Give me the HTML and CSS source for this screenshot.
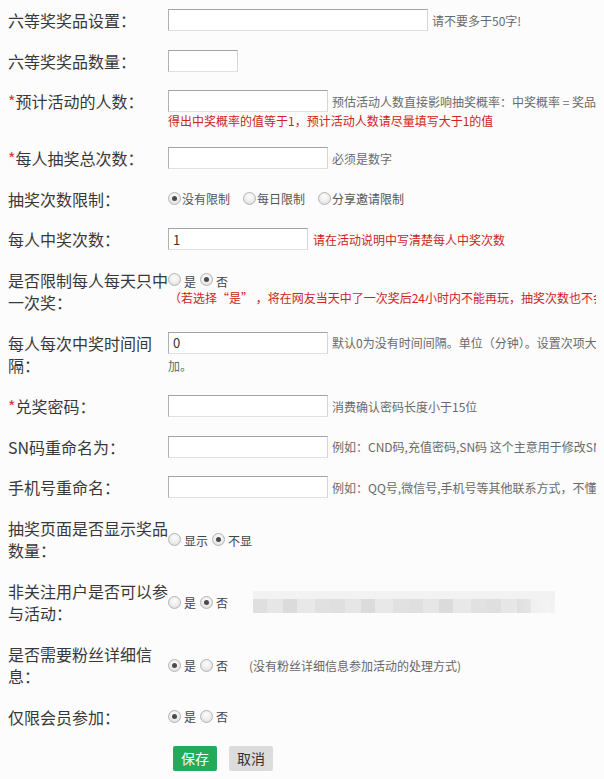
FILE: index.html
```html
<!DOCTYPE html>
<html lang="zh-CN">
<head>
<meta charset="utf-8">
<title>抽奖设置</title>
<link rel="stylesheet" href="styles.css">
</head>
<body>
<form class="form">
  <div class="row">
    <label class="label">六等奖奖品设置：</label>
    <div class="field">
      <div class="line"><input class="input w-xl" type="text"><span class="hint">请不要多于50字!</span></div>
    </div>
  </div>

  <div class="row">
    <label class="label">六等奖奖品数量：</label>
    <div class="field">
      <div class="line"><input class="input w-xs" type="text"></div>
    </div>
  </div>

  <div class="row">
    <label class="label"><span class="req">*</span>预计活动的人数：</label>
    <div class="field">
      <div class="line"><input class="input w-md" type="text"><span class="hint">预估活动人数直接影响抽奖概率：中奖概率 = 奖品总数/(预估活动人数*每人抽奖次数)，如果中奖概率大于1则会</span></div>
      <div class="sub warn">得出中奖概率的值等于1，预计活动人数请尽量填写大于1的值</div>
    </div>
  </div>

  <div class="row">
    <label class="label"><span class="req">*</span>每人抽奖总次数：</label>
    <div class="field">
      <div class="line"><input class="input w-md" type="text"><span class="hint">必须是数字</span></div>
    </div>
  </div>

  <div class="row">
    <label class="label">抽奖次数限制：</label>
    <div class="field">
      <div class="radios tight">
        <span class="opt"><span class="radio on"></span><span class="t">没有限制</span></span>
        <span class="opt"><span class="radio"></span><span class="t">每日限制</span></span>
        <span class="opt"><span class="radio"></span><span class="t">分享邀请限制</span></span>
      </div>
    </div>
  </div>

  <div class="row">
    <label class="label">每人中奖次数：</label>
    <div class="field">
      <div class="line"><input class="input w-sm" type="text" value="1"><span class="hint warn gap">请在活动说明中写清楚每人中奖次数</span></div>
    </div>
  </div>

  <div class="row">
    <label class="label">是否限制每人每天只中一次奖：</label>
    <div class="field">
      <div class="radios">
        <span class="opt"><span class="radio"></span><span class="t low">是</span></span>
        <span class="opt"><span class="radio on"></span><span class="t low">否</span></span>
      </div>
      <div class="note warn">（若选择“是” ，将在网友当天中了一次奖后24小时内不能再玩，抽奖次数也不会增加）</div>
    </div>
  </div>

  <div class="row">
    <label class="label">每人每次中奖时间间隔：</label>
    <div class="field">
      <div class="line"><input class="input w-md" type="text" value="0"><span class="hint">默认0为没有时间间隔。单位（分钟）。设置次项大于0时，中奖后间隔时间内抽奖次数不会增</span></div>
      <div class="sub2 hint-plain">加。</div>
    </div>
  </div>

  <div class="row">
    <label class="label"><span class="req">*</span>兑奖密码：</label>
    <div class="field">
      <div class="line"><input class="input w-md" type="text"><span class="hint">消费确认密码长度小于15位</span></div>
    </div>
  </div>

  <div class="row">
    <label class="label">SN码重命名为：</label>
    <div class="field">
      <div class="line"><input class="input w-md" type="text"><span class="hint">例如：CND码,充值密码,SN码 这个主意用于修改SN码的显示名称</span></div>
    </div>
  </div>

  <div class="row">
    <label class="label">手机号重命名：</label>
    <div class="field">
      <div class="line"><input class="input w-md" type="text"><span class="hint">例如：QQ号,微信号,手机号等其他联系方式，不懂请不要修改</span></div>
    </div>
  </div>

  <div class="row mid">
    <label class="label">抽奖页面是否显示奖品数量：</label>
    <div class="field">
      <div class="radios">
        <span class="opt"><span class="radio"></span><span class="t low">显示</span></span>
        <span class="opt"><span class="radio on"></span><span class="t low">不显</span></span>
      </div>
    </div>
  </div>

  <div class="row mid">
    <label class="label">非关注用户是否可以参与活动：</label>
    <div class="field">
      <div class="radios">
        <span class="opt"><span class="radio"></span><span class="t">是</span></span>
        <span class="opt"><span class="radio on"></span><span class="t">否</span></span>
        <span class="blur" aria-hidden="true"></span>
      </div>
    </div>
  </div>

  <div class="row mid">
    <label class="label">是否需要粉丝详细信息：</label>
    <div class="field">
      <div class="radios">
        <span class="opt"><span class="radio on"></span><span class="t">是</span></span>
        <span class="opt"><span class="radio"></span><span class="t">否</span></span>
        <span class="desc">(没有粉丝详细信息参加活动的处理方式)</span>
      </div>
    </div>
  </div>

  <div class="row">
    <label class="label">仅限会员参加：</label>
    <div class="field">
      <div class="radios">
        <span class="opt"><span class="radio on"></span><span class="t">是</span></span>
        <span class="opt"><span class="radio"></span><span class="t">否</span></span>
      </div>
    </div>
  </div>

  <div class="actions">
    <button type="button" class="btn btn-save">保存</button>
    <button type="button" class="btn btn-cancel">取消</button>
  </div>
</form>
</body>
</html>
```

FILE: styles.css
```css
html {
  overflow: hidden;
  background: #fcfcfc;
}

body {
  margin: 9px 8px 8px 8px;
  background: #fcfcfc;
  color: #333;
  font-family: "Noto Sans CJK SC", "Microsoft YaHei", sans-serif;
}

.form {
  display: block;
}

.row {
  display: flex;
  align-items: flex-start;
  margin-bottom: 18px;
}

.row.mid {
  align-items: center;
}

.label {
  flex: none;
  width: 160px;
  font-size: 16px;
  line-height: 22.5px;
  color: #383838;
}

.req {
  color: #d33;
}

.field {
  flex: none;
  font-size: 12px;
  white-space: nowrap;
}

.line {
  display: flex;
  align-items: center;
  height: 22.5px;
}

.input {
  box-sizing: border-box;
  height: 22px;
  margin: 0;
  padding: 0 4px;
  border: 1px solid;
  border-color: #a3a3a3 #d6d6d6 #e0e0e0 #b0b0b0;
  background: #fff;
  color: #333;
  font-family: "Noto Sans CJK SC", sans-serif;
  font-size: 13px;
  outline: none;
}

.w-xl { width: 260px; }
.w-md { width: 160px; }
.w-sm { width: 140px; }
.w-xs { width: 70px; }

.hint {
  margin-left: 4px;
  color: #6a6a6a;
  font-size: 12px;
}

.hint.gap {
  margin-left: 5px;
}

.warn,
.hint.warn {
  color: #cc2424;
}

.sub {
  margin-top: 0.5px;
  line-height: 16px;
  font-size: 12px;
}

.sub2 {
  margin-top: 1px;
  line-height: 22px;
}

.hint-plain {
  color: #6a6a6a;
  font-size: 12px;
}

.note {
  font-size: 12px;
  line-height: 14px;
  padding-left: 1px;
}

.radios {
  display: flex;
  align-items: center;
  height: 22.5px;
  font-size: 12px;
  color: #444;
}

.opt {
  display: inline-flex;
  align-items: center;
  margin-right: 4px;
}

.opt .t {
  margin-left: 3px;
}

.opt .t.low {
  padding-top: 3px;
}

.radios.tight .opt {
  margin-right: 13px;
}

.radios.tight .opt .t {
  margin-left: 1px;
  color: #555;
}

.radio {
  position: relative;
  box-sizing: border-box;
  width: 13px;
  height: 13px;
  border-radius: 50%;
  border: 1px solid #b4b4b4;
  background: radial-gradient(circle at 50% 35%, #fdfdfd 0%, #ececec 55%, #d6d6d6 100%);
}

.radio.on::after {
  content: "";
  position: absolute;
  left: 3px;
  top: 3px;
  width: 5px;
  height: 5px;
  border-radius: 50%;
  background: #4a4a4a;
}

.desc {
  margin-left: 17px;
  color: #666;
}

.blur {
  display: block;
  margin-left: 21px;
  width: 302px;
  height: 22px;
  background:
    linear-gradient(#f2f2f2, #f2f2f2) top left / 100% 8px no-repeat,
    linear-gradient(90deg, rgba(252,252,252,0) 85%, rgba(252,252,252,0.7) 100%),
    repeating-linear-gradient(90deg,
      #dfdfdf 0 14px,
      #e6e6e6 14px 30px,
      #dbdbdb 30px 44px,
      #e8e8e8 44px 62px,
      #e1e1e1 62px 78px);
}

.actions {
  display: flex;
  gap: 12px;
  margin-left: 165px;
}

.btn {
  height: 25px;
  padding: 0 8px;
  border: 0;
  border-radius: 2px;
  font-family: "Noto Sans CJK SC", sans-serif;
  font-size: 14px;
  line-height: 25px;
  cursor: pointer;
}

.btn-save {
  background: #25a95a;
  color: #fff;
}

.btn-cancel {
  background: #dcdcdc;
  color: #333;
}
```
